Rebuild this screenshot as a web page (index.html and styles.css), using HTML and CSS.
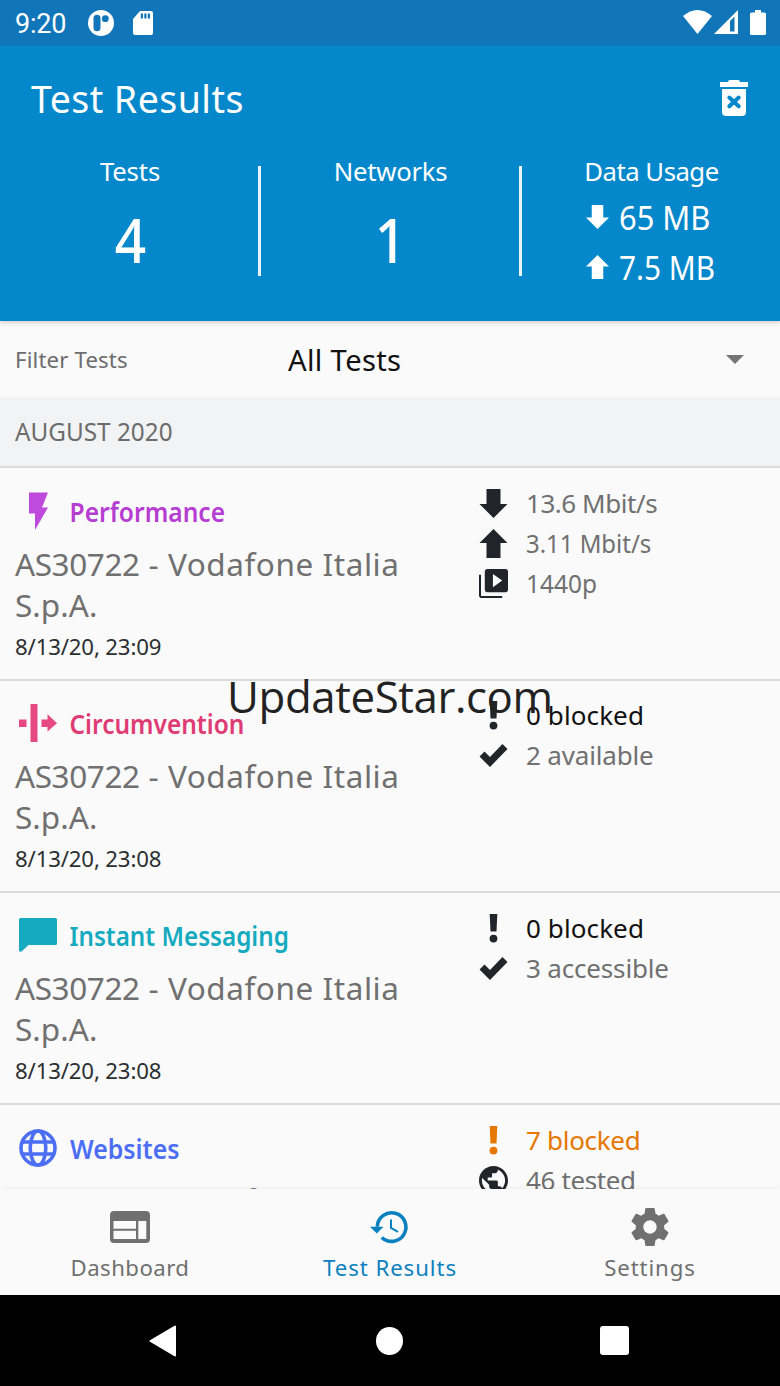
FILE: index.html
```html
<!DOCTYPE html>
<html lang="en">
<head>
<meta charset="utf-8">
<title>Test Results</title>
<link rel="stylesheet" href="styles.css">
</head>
<body>
<svg class="defs" width="0" height="0">
  <symbol id="down" viewBox="0 0 28 29"><path d="M7 0h14v15h7L14 29 0 15h7z"/></symbol>
  <symbol id="up" viewBox="0 0 28 29"><path d="M7 29h14V14h7L14 0 0 14h7z"/></symbol>
  <symbol id="bang" viewBox="0 0 28 29"><path d="M10.200 0h7.600l-.8 17.400h-6z"/><circle cx="14" cy="24.600" r="3.900"/></symbol>
  <symbol id="check" viewBox="0 0 28 29"><path d="M0 15.500l5-5 5.500 5.500L23 3l5 5L10.500 26z"/></symbol>
</svg>
<div class="screen">
  <header class="top">
    <div class="status">
      <span class="clock">9:20</span>
      <svg class="pill" viewBox="0 0 26 26"><circle cx="13" cy="13" r="13" fill="#fff"/><rect x="5.500" y="4.800" width="7" height="16.500" rx="3.500" fill="#1176b9"/><circle cx="17.300" cy="8.700" r="3.400" fill="#1176b9"/></svg>
      <svg class="sd" viewBox="0 0 20 24"><path d="M7 0h11a2 2 0 0 1 2 2v20a2 2 0 0 1-2 2H2a2 2 0 0 1-2-2V8z" fill="#fff"/><path d="M7.800 2.500h2.200v5H7.800zM11.300 2.500h2.200v5h-2.200zM14.800 2.500H17v5h-2.200z" fill="#1176b9"/></svg>
      <svg class="wifi" viewBox="0 0 29 24"><path d="M0 6Q14.500-6 29 6L14.500 24z" fill="#fff"/></svg>
      <svg class="signal" viewBox="0 0 24 24"><path fill-rule="evenodd" d="M24 0v24H0zM16 11v10.500h4.500V6.500z" fill="#fff"/></svg>
      <svg class="battery" viewBox="0 0 16 25"><path d="M5 0h6v2.500h3.500A1.500 1.500 0 0 1 16 4v19.500a1.500 1.500 0 0 1-1.500 1.500h-13A1.500 1.500 0 0 1 0 23.500V4a1.500 1.500 0 0 1 1.500-1.500H5z" fill="#fff"/></svg>
    </div>
    <div class="appbar">
      <h1>Test Results</h1>
      <svg class="trash" viewBox="0 0 28 36"><path d="M8 2q0-2 2-2h8q2 0 2 2h8v5H0V2zM2 9h24v23q0 4-4 4H6q-4 0-4-4z" fill="#fff"/><path d="M9.300 17.500l9.400 8.800m0-8.800l-9.400 8.800" stroke="#0588cb" stroke-width="4" stroke-linecap="round"/></svg>
    </div>
    <div class="summary">
      <div class="cell"><span class="label">Tests</span><span class="count">4</span></div>
      <div class="cell ruled"><span class="label">Networks</span><span class="count one">1</span></div>
      <div class="cell usage"><span class="label wide">Data Usage</span>
        <span class="amount"><svg><use href="#down"/></svg><b class="in">65 MB</b></span>
        <span class="amount"><svg><use href="#up"/></svg><b class="out">7.5 MB</b></span>
      </div>
    </div>
  </header>
  <div class="filter"><span class="filter-label">Filter Tests</span><span class="filter-value">All Tests</span><i class="caret"></i></div>
  <main class="list">
    <h2 class="month"><span>AUGUST 2020</span></h2>
    <section class="row first perf">
      <div class="info">
        <div class="name"><svg viewBox="0 0 38 38"><path d="M10 0.500h19L23 15.500h6L16 38V21.500h-6z"/></svg><span>Performance</span></div>
        <p class="network"><span class="asn">AS30722</span> - Vodafone Italia <span class="spa">S.p.A.</span></p><p class="date">8/13/20, 23:09</p>
      </div>
      <ul class="stats">
        <li><svg><use href="#down"/></svg><span class="s1">13.6 Mbit/s</span></li>
        <li><svg><use href="#up"/></svg><span class="s2">3.11 Mbit/s</span></li>
        <li><svg viewBox="2 2 20 20"><path fill-rule="evenodd" d="M3.400 6H2v14.200C2 21.200 2.800 22 3.800 22H18v-1.400H3.400zM20.300 2H7.700C6.800 2 6 2.800 6 3.700v12.600c0 .9.800 1.700 1.700 1.700h12.600c.9 0 1.700-.8 1.700-1.700V3.700C22 2.800 21.200 2 20.300 2zM11.600 14.600V5.400l6.400 4.600z"/></svg><span class="s3">1440p</span></li>
      </ul>
    </section>
    <section class="row circ">
      <div class="info">
        <div class="name"><svg viewBox="0 0 38 38"><path d="M0 15.500h7.500V23H0zM11.500 0h7v38h-7zM22.500 15.500h6v-5.200L38 19.200l-9.500 8.300V23h-6z"/></svg><span>Circumvention</span></div>
        <p class="network"><span class="asn">AS30722</span> - Vodafone Italia <span class="spa">S.p.A.</span></p><p class="date">8/13/20, 23:08</p>
      </div>
      <ul class="stats">
        <li class="strong"><svg><use href="#bang"/></svg><span class="s4">0 blocked</span></li>
        <li><svg><use href="#check"/></svg><span class="s5">2 available</span></li>
      </ul>
    </section>
    <section class="row im">
      <div class="info">
        <div class="name"><svg viewBox="0 0 38 38"><path d="M1.500 2h35A1.500 1.500 0 0 1 38 3.500v24a1.500 1.500 0 0 1-1.500 1.500H9.500L2.500 35.500Q0 36.500 0 34V3.500A1.500 1.500 0 0 1 1.500 2z"/></svg><span>Instant Messaging</span></div>
        <p class="network"><span class="asn">AS30722</span> - Vodafone Italia <span class="spa">S.p.A.</span></p><p class="date">8/13/20, 23:08</p>
      </div>
      <ul class="stats">
        <li class="strong"><svg><use href="#bang"/></svg><span class="s4">0 blocked</span></li>
        <li><svg><use href="#check"/></svg><span class="s6">3 accessible</span></li>
      </ul>
    </section>
    <section class="row web">
      <div class="info">
        <div class="name"><svg viewBox="0 0 38 38"><g fill="none" stroke="currentColor" stroke-width="3.600"><circle cx="19" cy="19" r="17"/><ellipse cx="19" cy="19" rx="7.800" ry="17"/><path d="M3.500 13h31M3.500 25h31"/></g></svg><span>Websites</span></div>
        <p class="network"><span class="asn">AS30722</span> - Vodafone Italia</p>
      </div>
      <ul class="stats">
        <li class="warn"><svg><use href="#bang"/></svg><span class="s8">7 blocked</span></li>
        <li><svg viewBox="2 2 20 20"><path d="M12 2C6.480 2 2 6.480 2 12s4.480 10 10 10 10-4.480 10-10S17.520 2 12 2zm-1 17.930c-3.950-.49-7-3.850-7-7.930 0-.62.08-1.210.21-1.790L9 15v1c0 1.100.9 2 2 2v1.930zm6.900-2.540c-.26-.81-1-1.390-1.900-1.390h-1v-3c0-.55-.45-1-1-1H8v-2h2c.55 0 1-.45 1-1V7h2c1.100 0 2-.9 2-2v-.41c2.930 1.190 5 4.060 5 7.410 0 2.080-.8 3.970-2.100 5.390z"/></svg><span class="s7">46 tested</span></li>
      </ul>
    </section>
  </main>
  <nav class="tabs">
    <a class="tab"><svg viewBox="0 0 40 38"><path fill-rule="evenodd" d="M4 3h32a4 4 0 0 1 4 4v24a4 4 0 0 1-4 4H4a4 4 0 0 1-4-4V7a4 4 0 0 1 4-4zM3.500 13v7.800H26V13zM3.500 22.800V31H26v-8.200zM28.300 13v18h8V13z"/></svg><span class="t1">Dashboard</span></a>
    <a class="tab active"><svg viewBox="0 0 40 38"><path d="M7.300 18.800A14.300 14.300 0 1 1 11.800 29.500" fill="none" stroke="currentColor" stroke-width="3.600"/><path d="M0 18.800h13.500L6.800 25.500z"/><path d="M21 11.500v8.300l7 4" fill="none" stroke="currentColor" stroke-width="2"/></svg><span class="t2">Test Results</span></a>
    <a class="tab"><svg viewBox="2 2 20 20"><path d="M19.430 12.980c.04-.32.07-.64.07-.98s-.03-.66-.07-.98l2.110-1.650c.19-.15.24-.42.12-.64l-2-3.460c-.12-.22-.39-.3-.61-.22l-2.490 1c-.52-.4-1.080-.73-1.690-.98l-.38-2.650C14.460 2.180 14.250 2 14 2h-4c-.25 0-.46.18-.49.42l-.38 2.650c-.61.25-1.170.59-1.690.98l-2.490-1c-.23-.09-.49 0-.61.22l-2 3.460c-.13.22-.07.49.12.64l2.110 1.650c-.04.32-.07.65-.07.98s.03.66.07.98l-2.110 1.650c-.19.15-.24.42-.12.64l2 3.460c.12.22.39.3.61.22l2.490-1c.52.4 1.080.73 1.690.98l.38 2.650c.03.24.24.42.49.42h4c.25 0 .46-.18.49-.42l.38-2.650c.61-.25 1.170-.59 1.690-.98l2.490 1c.23.09.49 0 .61-.22l2-3.460c.12-.22.07-.49-.12-.64l-2.110-1.650zM12 15.500c-1.930 0-3.500-1.570-3.500-3.500s1.570-3.500 3.500-3.500 3.500 1.570 3.500 3.500-1.570 3.500-3.500 3.500z"/></svg><span class="t3">Settings</span></a>
  </nav>
  <footer class="system">
    <svg class="back" viewBox="0 0 28 32"><path d="M1.500 16L26 1.500v29z" fill="#fff" stroke="#fff" stroke-width="2" stroke-linejoin="round"/></svg>
    <i class="home"></i>
    <i class="recent"></i>
  </footer>
  <div class="watermark">UpdateStar.com</div>
</div>
</body>
</html>
```
FILE: styles.css
```css
* { box-sizing: border-box; margin: 0; padding: 0; }
body { background: #fafafa; }
svg { display: block; flex: none; fill: currentColor; }
.defs { position: absolute; }
.screen {
  position: relative;
  display: flex;
  flex-direction: column;
  width: 780px;
  height: 1386px;
  overflow: hidden;
  font-family: "Noto Sans", sans-serif;
  white-space: nowrap;
}

/* Header */
.top { flex: none; height: 321px; background: #0588cb; color: #fff; box-shadow: 0 1px 5px rgba(0,0,0,.22); z-index: 1; }
.status { display: flex; height: 46px; padding-left: 15px; background: #1176b9; }
.clock { width: 73px; font: 400 27px/48px Roboto, sans-serif; letter-spacing: -.2px; }
.pill { width: 26px; height: 26px; margin-top: 10px; }
.sd { width: 20px; height: 24px; margin: 11px 0 0 19px; }
.wifi { width: 29px; height: 24px; margin: 10px 0 0 auto; }
.signal { width: 24px; height: 24px; margin: 10px 12px 0 2px; }
.battery { width: 16px; height: 25px; margin: 10px 14.5px 0 0; }
.appbar { display: flex; justify-content: space-between; height: 108px; padding: 23px 32px 0 31px; }
h1 { font-size: 37.5px; font-weight: 400; line-height: 60px; letter-spacing: .45px; }
.trash { width: 28px; height: 36px; margin-top: 11px; }
.summary { display: grid; grid-template-columns: repeat(3, 260px); }
.cell { display: flex; flex-direction: column; align-items: center; height: 138px; }
.label { font-size: 25.7px; line-height: 36px; letter-spacing: -.15px; }
.ruled .label { padding-left: 1px; letter-spacing: -.25px; }
.label.wide { margin-bottom: 3px; padding-left: 3px; letter-spacing: -.5px; }
.count { margin-top: 14px; font-size: 61px; font-weight: 500; line-height: 72px; transform: scaleX(.9); }
.ruled { position: relative; }
.ruled::before, .ruled::after { content: ""; position: absolute; top: 12px; width: 3px; height: 110px; background: #e9f5fb; }
.ruled::before { left: -2px; }
.ruled::after { right: -2px; }
.amount { display: flex; align-self: flex-start; align-items: center; height: 50px; padding-left: 66px; font-size: 32px; line-height: 50px; }
.amount svg { width: 23px; height: 24px; margin: 0 10px 2px 0; }
.amount b { font-weight: 400; transform-origin: left; }
.in { transform: scaleX(.965); }
.out { transform: scaleX(.93); }

/* Filter */
.filter { display: flex; flex: none; align-items: center; height: 76px; padding: 0 36px 0 15px; background: #fafafa; }
.filter-label { width: 273px; color: #6c6c6c; font-size: 22.2px; letter-spacing: .15px; }
.filter-value { padding-top: 1px; font-size: 29.2px; letter-spacing: .33px; color: #111; }
.caret { margin-left: auto; border: 9px solid transparent; border-top-color: #757575; border-bottom: 0; }

/* Results */
.list { flex: none; height: 792px; overflow: hidden; background: #fafafa; }
.month { height: 69px; padding-left: 15px; background: #f1f3f5; color: #6c6c6c; font-size: 26px; font-weight: 400; line-height: 69px; }
.month span { display: inline-block; transform: scaleX(.935); transform-origin: left; }
.row { display: flex; height: 212px; border-top: 2px solid #dadbdc; }
.row.first { height: 213px; }
.info { width: 478px; padding: 23px 0 0 15px; }
.first .info { padding-top: 24px; }
.name { display: flex; align-items: center; height: 40px; padding-left: 4px; font-size: 26.4px; font-weight: 600; }
.name svg { width: 38px; height: 38px; margin: -1px 11px 1px 0; }
.name span { transform-origin: left; }
.perf .name { color: #be4bdb; }
.circ .name { color: #e64980; }
.im .name { color: #15aabf; }
.web .name { color: #4c6ef5; }
.perf .name span { color: #b63dd2; transform: translateX(1.500px) scaleX(.932); }
.circ .name span { color: #e03a74; transform: translateX(1.500px) scaleX(.927); }
.im .name span { transform: translateX(1.500px) scaleX(.918); }
.web .name span { transform: translateX(2px) scaleX(.942); }
.web .name { margin-top: 1px; }
.network { width: 400px; margin-top: 11px; color: #707070; font-size: 31.5px; line-height: 41px; letter-spacing: .55px; white-space: normal; }
.web .network { margin-top: 10px; white-space: nowrap; }
.asn { letter-spacing: -.4px; }
.spa { letter-spacing: .06px; }
.date { margin-top: 6px; color: #2b2f32; font-size: 22.2px; line-height: 32px; letter-spacing: -.15px; }
.stats { padding-top: 15px; list-style: none; }
.circ .stats { padding-top: 14px; }
.stats li { display: flex; align-items: center; height: 40px; color: #707070; font-size: 26px; line-height: 40px; }
.stats svg { width: 29px; height: 29px; margin: 0 18px 0 1px; color: #212529; }
.stats span { transform-origin: left; }
.stats .strong { color: #111; }
.stats .warn, .stats .warn svg { color: #e67700; }
.s1 { letter-spacing: -.45px; }
.s2 { transform: scaleX(.92); }
.s3 { transform: scaleX(.94); }
.s4 { letter-spacing: .1px; }
.s5, .s6 { letter-spacing: -.17px; }
.s7 { letter-spacing: -.37px; }
.s8 { letter-spacing: -.3px; }

/* Tabs */
.tabs { display: grid; flex: none; grid-template-columns: repeat(3, 260px); height: 106px; background: #fafafa; box-shadow: 0 -1px 5px rgba(0,0,0,.05); z-index: 1; }
.tab { display: flex; flex-direction: column; align-items: center; padding-top: 19px; color: #707070; }
.tab svg { width: 40px; height: 38px; }
.tab span { margin-top: 6px; font-size: 22.2px; line-height: 32px; }
.tab.active { color: #0b80bf; }
.t1 { letter-spacing: .45px; }
.t2 { letter-spacing: .95px; }
.t3 { letter-spacing: .87px; }

/* System bar */
.system { display: flex; flex: none; align-items: center; height: 91px; padding-left: 149px; background: #000; }
.back { width: 28px; height: 32px; }
.home { width: 27px; height: 28px; margin: 0 197px 0 199px; border-radius: 50%; background: #fff; }
.recent { width: 29px; height: 29px; border-radius: 3px; background: #fff; }

.watermark { position: absolute; z-index: 2; top: 666px; left: 227px; color: #222; font: 400 43.8px/60px "Open Sans", sans-serif; letter-spacing: -.4px; }
```
